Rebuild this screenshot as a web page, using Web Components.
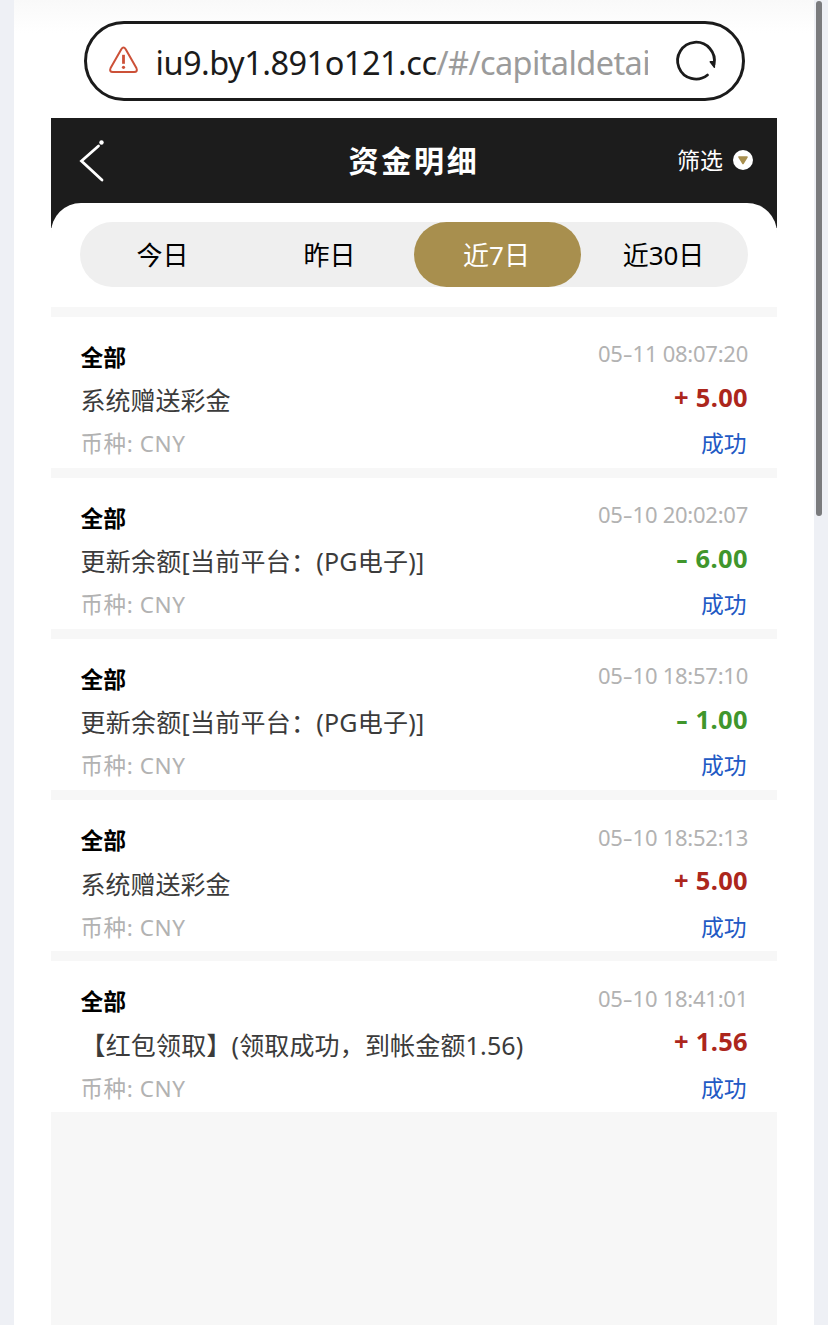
<!DOCTYPE html>
<html lang="zh-CN">
<head>
<meta charset="utf-8">
<title>资金明细</title>
<style>
html,body{margin:0;height:100%;overflow:hidden;background:#eef0f5;font-family:"Noto Sans","Noto Sans CJK SC",sans-serif}
</style>
</head>
<body>
<capital-page></capital-page>
<script>
const define=(name,html,init)=>customElements.define(name,class extends HTMLElement{
  constructor(){super();this.attachShadow({mode:'open'}).innerHTML=html}
  connectedCallback(){if(init)init.call(this)}
});

// Inline text whose tracking is adjusted to fill the width given in "w".
define('fit-text','<style>:host{display:inline-block;white-space:pre}::slotted(i){font-style:normal;display:inline-block;transform:scaleX(1.4);margin:0 .07em}</style><span><slot></slot></span>',function(){
  const w=parseFloat(this.getAttribute('w')),n=[...this.textContent].length;
  if(w){this.style.letterSpacing='0';const cur=this.getBoundingClientRect().width;this.style.letterSpacing=((w-cur)/n)+'px'}
});

define('address-bar',`<style>
:host{box-sizing:border-box;display:flex;align-items:center;height:80px;width:661px;margin:21px 0 0 32.5px;border:3px solid #1b1b1b;border-radius:40px;background:#fff;padding-left:20px}
.url{width:492px;height:50px;margin-left:15px;padding-top:4px;overflow:hidden;white-space:nowrap;font-size:32.5px;line-height:50px;color:#1b1b1b}
.path{color:#9b9b9b}
svg{flex:none;display:block}
.reload{margin-left:25px}
</style>
<svg width="34" height="34" viewBox="0 0 34 34" fill="none" stroke="#cc5138" stroke-width="2"><path d="M14.3 5.2Q16.5 1.9 18.7 5.2L29.4 24Q31 28 27.2 28H5.8Q2 28 3.6 24Z" stroke-linejoin="round"/><path d="M16.5 10.8V19.8" stroke-width="2.8"/><circle cx="16.5" cy="23.3" r="1.6" fill="#cc5138" stroke="none"/></svg>
<div class="url"><fit-text w="281">iu9.by1.891o121.cc</fit-text><fit-text class="path" w="213.5">/#/capitaldetai</fit-text></div>
<svg class="reload" width="46" height="46" viewBox="0 0 46 46" fill="none" stroke="#1b1b1b" stroke-width="2.8" stroke-linecap="round"><path d="M34.5 37A18.4 18.4 0 1 1 41 26.5"/><path d="M37.2 23.8H41.4V29.2Z" fill="#1b1b1b" stroke-width="1.4" stroke-linejoin="round"/></svg>`);

define('title-bar',`<style>
:host{display:grid;grid-template-columns:1fr auto 1fr;align-items:center;height:85px;color:#fff;padding:0 24px 0 28px}
h1{font-size:30px;line-height:40px;font-weight:700;margin:2px 4px 0 0}
.filter{justify-self:end;display:flex;align-items:center;gap:10px;font-size:23px;line-height:32px}
svg{display:block}
</style>
<svg width="30" height="44" viewBox="0 0 30 44" fill="none" stroke="#fff" stroke-width="2.8" stroke-linecap="round"><path d="M19.5 8L2.5 23L23 42" stroke-linejoin="miter"/><circle cx="22.5" cy="4.5" r="2.2" fill="#fff" stroke="none"/></svg>
<h1><fit-text w="131">资金明细</fit-text></h1>
<div class="filter"><span>筛选</span><svg width="20" height="20" viewBox="0 0 20 20"><circle cx="10" cy="10" r="10" fill="#fff"/><path d="M6 7H14L10 13.5Z" fill="#a88f4e" stroke="#a88f4e" stroke-width="1.6" stroke-linejoin="round"/></svg></div>`);

define('range-tabs',`<style>
:host{display:grid;grid-template-columns:repeat(4,1fr);height:65px;margin:0 29px;border-radius:33px;background:#efefef}
::slotted(span){display:flex;align-items:center;justify-content:center;padding-right:2px;font-size:26px;line-height:36px;color:#000;border-radius:33px}
::slotted(.on){background:#a88f4e;color:#fff}
</style><slot></slot>`);

define('record-row',`<style>
:host{box-sizing:border-box;display:grid;grid-template-columns:1fr auto;grid-template-rows:43.5px 43.5px 43.5px;align-items:center;height:161.1px;border-top:10px solid #f7f7f7;padding:17.5px 29px 0 29.5px;background:#fff;white-space:nowrap}
.r{justify-self:end}
.kind{font-size:22.8px;font-weight:700;color:#000;padding-top:1px}
.time{font-size:22px;color:#b2b2b2;line-height:38px;padding-bottom:5px}
.desc{font-size:25px;color:#3b3b3b}
.amt{font-size:25.5px;font-weight:700;color:#ac261c;padding-bottom:5px}
.minus{color:#40962c}
.cur{font-size:22.5px;color:#b2b2b2}
.ok{font-size:22.8px;color:#2259c4;padding-right:1.5px}
</style><span class="kind">全部</span><span class="time r"></span><span class="desc"></span><span class="amt r"></span><span class="cur"></span><span class="ok r">成功</span>`,function(){
  const q=s=>this.shadowRoot.querySelector(s),a=s=>this.getAttribute(s);
  const put=(s,t,w)=>{const f=document.createElement('fit-text');f.innerHTML=t.replace('-','<i>-</i>');f.setAttribute('w',w);q(s).append(f)};
  put('.time',a('time'),150);
  put('.desc',a('desc'),a('w'));
  put('.amt',a('amount'),a('amount')[0]==='-'?71.5:74);
  put('.cur','币种: CNY',105);
  if(a('amount')[0]==='-')q('.amt').classList.add('minus');
});

define('app-screen',`<style>
:host{display:flex;flex-direction:column;flex:1;margin-top:16.5px;background:#f7f7f7}
.head{background:#1c1c1c;padding-bottom:25px}
.sheet{margin-top:-25px;border-radius:30px 30px 0 0;background:linear-gradient(#fff,#fff);padding-top:19.5px}
.rows{margin-top:19.5px}
</style>
<div class="head"><title-bar></title-bar></div>
<div class="sheet"><range-tabs><span>今日</span><span>昨日</span><span class="on">近7日</span><span>近30日</span></range-tabs>
<div class="rows">
<record-row time="05-11 08:07:20" desc="系统赠送彩金" w="150" amount="+ 5.00"></record-row>
<record-row time="05-10 20:02:07" desc="更新余额[当前平台：(PG电子)]" w="344" amount="- 6.00"></record-row>
<record-row time="05-10 18:57:10" desc="更新余额[当前平台：(PG电子)]" w="344" amount="- 1.00"></record-row>
<record-row time="05-10 18:52:13" desc="系统赠送彩金" w="150" amount="+ 5.00"></record-row>
<record-row time="05-10 18:41:01" desc="【红包领取】(领取成功，到帐金额1.56)" w="443" amount="+ 1.56"></record-row>
</div></div>`);

define('capital-page',`<style>
:host{display:grid;grid-template-columns:14px 800px 14px;height:1325px;background:#eef0f5}
main{grid-column:2;box-sizing:border-box;display:flex;flex-direction:column;padding:0 37px;background:linear-gradient(#f9f9f9,#fff 33px)}
.bar{grid-column:3;width:6px;height:515px;margin:1px 0 0 2px;border-radius:3px;background:#7a7b7d}
</style><main><address-bar></address-bar><app-screen></app-screen></main><div class="bar"></div>`);
</script>
</body>
</html>
